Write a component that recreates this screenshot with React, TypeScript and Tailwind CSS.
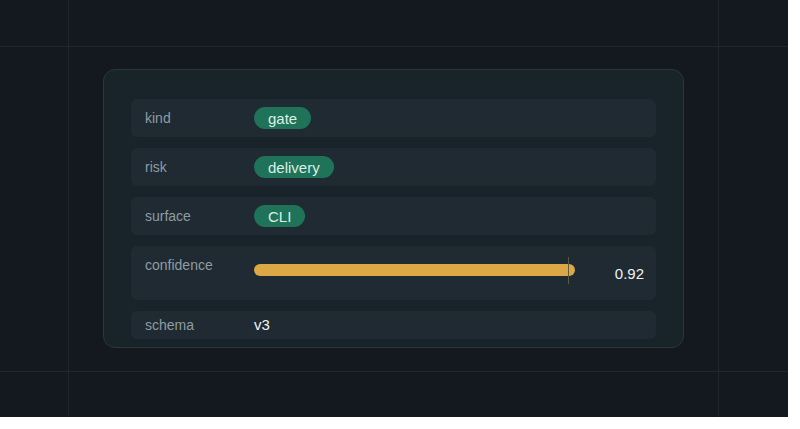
import React from "react";

type Row = {
  label: string;
  kind: "pill" | "text" | "bar";
  value?: string;
  score?: number;
};

const rows: Row[] = [
  { label: "kind", kind: "pill", value: "gate" },
  { label: "risk", kind: "pill", value: "delivery" },
  { label: "surface", kind: "pill", value: "CLI" },
  { label: "confidence", kind: "bar", score: 0.92 },
  { label: "schema", kind: "text", value: "v3" },
];

const Pill = ({ text }: { text: string }) => (
  <span className="inline-flex h-[22px] items-center rounded-full bg-[#1f7358] px-[14px] text-[15px] leading-none text-[#dcefe6]">
    {text}
  </span>
);

const ScoreBar = ({ score }: { score: number }) => (
  <div className="flex flex-1 items-start">
    <div className="relative mt-[8px] h-[12px] w-[349px]">
      <div
        className="h-full rounded-full bg-[#dca845]"
        style={{ width: `${score * 100}%` }}
      />
      {/* threshold tick */}
      <div className="absolute left-[314px] top-[-7px] h-[27px] w-px bg-[#5a5a40]" />
    </div>
    <span className="ml-auto mt-[9px] text-[15px] leading-[18px] text-[#eef2f4]">
      {score.toFixed(2)}
    </span>
  </div>
);

const FieldRow = ({ row, last }: { row: Row; last: boolean }) => {
  if (row.kind === "bar") {
    return (
      <div className="flex h-[54px] items-start rounded-[6px] bg-[#1f2a32] pl-[14px] pr-[12px] pt-[10px]">
        <span className="w-[109px] shrink-0 text-[14px] leading-[18px] text-[#8e9ca3]">
          {row.label}
        </span>
        <ScoreBar score={row.score!} />
      </div>
    );
  }
  return (
    <div
      className={
        last
          ? "flex h-[28px] items-center rounded-[6px] bg-[#1f2a32] px-[14px]"
          : "flex h-[38px] items-center rounded-[6px] bg-[#1f2a32] px-[14px]"
      }
    >
      <span className="w-[109px] shrink-0 text-[14px] text-[#8e9ca3]">{row.label}</span>
      {row.kind === "pill" && <Pill text={row.value!} />}
      {row.kind === "text" && (
        <span className="text-[15px] text-[#f1f4f5]">{row.value}</span>
      )}
    </div>
  );
};

export default function App() {
  return (
    <div
      className="relative h-[417px] w-[788px] overflow-hidden bg-[#141920]"
      style={{ fontFamily: '"Liberation Sans", Arial, sans-serif' }}
    >
      {/* background grid */}
      <div className="absolute left-[68px] top-0 h-full w-px bg-[#1e2829]" />
      <div className="absolute left-[718px] top-0 h-full w-px bg-[#1e2829]" />
      <div className="absolute left-0 top-[46px] h-px w-full bg-[#1e2829]" />
      <div className="absolute left-0 top-[371px] h-px w-full bg-[#1e2829]" />

      <div className="relative flex h-full items-start pl-[103px] pt-[69px]">
        <div className="w-[581px] rounded-[12px] border border-[#28393a] bg-[#19232a] px-[27px] pb-[8px] pt-[29px]">
          <div className="flex flex-col gap-[11px]">
            {rows.map((r, i) => (
              <FieldRow key={r.label} row={r} last={i === rows.length - 1} />
            ))}
          </div>
        </div>
      </div>
    </div>
  );
}
